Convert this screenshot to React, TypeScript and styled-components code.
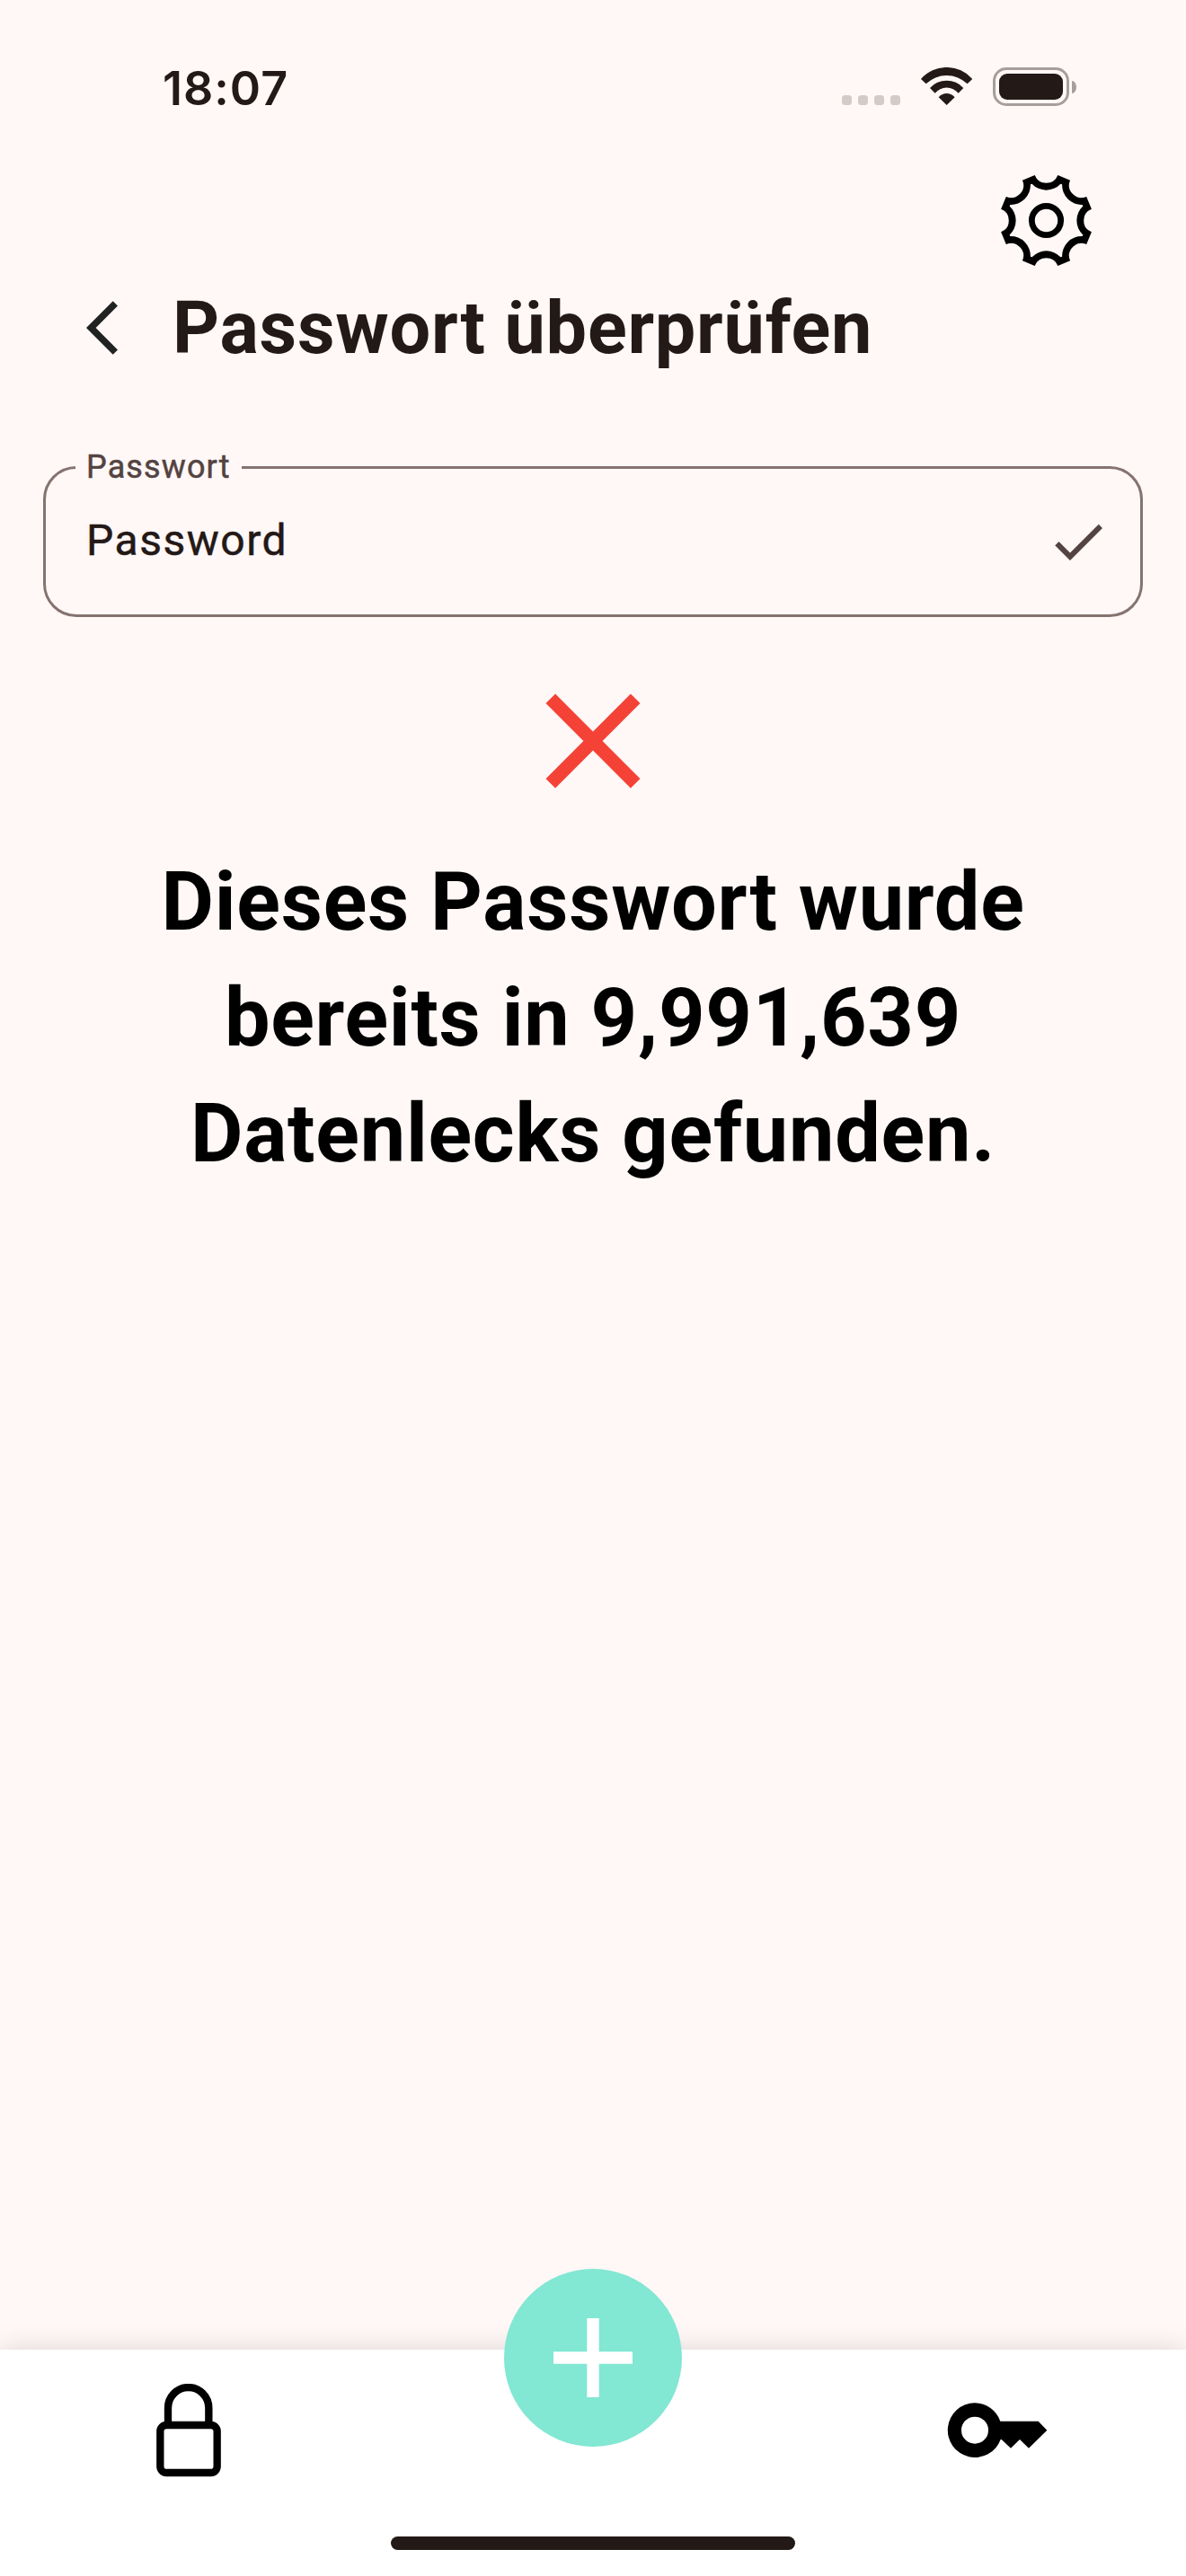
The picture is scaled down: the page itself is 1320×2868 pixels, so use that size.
import React from "react";
import styled, { createGlobalStyle } from "styled-components";

const ink = "#231917";
const surface = "#fff8f6";

const GlobalStyle = createGlobalStyle`
  *, *::before, *::after { box-sizing: border-box; }
  body { margin: 0; background: ${surface}; }
  svg { display: block; flex: none; }
  button { padding: 0; border: 0; background: none; font: inherit; color: inherit; }
`;

const Screen = styled.div`
  display: flex;
  flex-direction: column;
  width: 1320px;
  height: 2868px;
  overflow: hidden;
  background: ${surface};
  color: ${ink};
  font-family: Roboto, "Liberation Sans", sans-serif;
`;

const StatusBar = styled.header`
  display: flex;
  justify-content: space-between;
  align-items: flex-start;
  height: 192px;
  padding: 75px 122px 0 181px;
`;

const Clock = styled.time`
  margin-top: -8.5px;
  font: 600 52px/64px Inter, "Liberation Sans", sans-serif;
  letter-spacing: 1px;
`;

const StatusIcons = styled.div`
  display: flex;
  align-items: flex-start;
`;

const SignalDots = styled.div`
  display: flex;
  gap: 7px;
  margin: 31px 23px 0 0;
`;

const SignalDot = styled.span`
  width: 11px;
  height: 11px;
  border-radius: 3.5px;
  background: #d4cbc9;
`;

const Battery = styled.div`
  display: flex;
  width: 85px;
  height: 43px;
  margin-left: 22.7px;
  padding: 4px;
  border: 3px solid #a79e9c;
  border-radius: 15px;
`;

const BatteryLevel = styled.span`
  flex: 1;
  border-radius: 9px;
  background: ${ink};
`;

const BatteryCap = styled.span`
  width: 5px;
  height: 14px;
  margin: 14.5px 0 0 3px;
  border-radius: 0 5px 5px 0 / 0 7px 7px 0;
  background: #a79e9c;
`;

const Toolbar = styled.div`
  display: flex;
  justify-content: flex-end;
  height: 108px;
  padding: 3px 105px 0 0;
`;

const TitleRow = styled.div`
  display: flex;
  align-items: center;
  gap: 24px;
  height: 129px;
  padding-left: 96px;
`;

const Title = styled.h1`
  margin: 2px 0 0;
  font-size: 81px;
  font-weight: 700;
  line-height: 96px;
  letter-spacing: 0.75px;
`;

const Field = styled.fieldset`
  display: flex;
  justify-content: space-between;
  height: 188px;
  margin: 70px 48px 0;
  padding: 0 33px;
  border: 3px solid #857370;
  border-radius: 37px;
`;

const FieldLabel = styled.legend`
  height: 42px;
  padding: 0 12px;
  color: #534341;
  font-size: 36px;
  line-height: 42px;
  letter-spacing: 1.125px;
  -webkit-text-stroke: 0.5px currentColor;
`;

const FieldValue = styled.span`
  margin: 25px 0 0 12px;
  font-size: 48px;
  line-height: 72px;
  letter-spacing: 1.5px;
  -webkit-text-stroke: 0.5px currentColor;
`;

const FieldAction = styled.span`
  margin-top: 26px;
`;

const Result = styled.main`
  display: flex;
  flex: 1;
  flex-direction: column;
  align-items: center;
  padding-top: 48px;
`;

const ResultText = styled.p`
  width: 1080px;
  margin: 24.5px 0 0;
  color: #000;
  font-size: 90px;
  font-weight: 700;
  line-height: 129px;
  letter-spacing: 0.75px;
  text-align: center;
`;

const BottomBar = styled.nav`
  position: relative;
  display: flex;
  flex-direction: column;
  height: 252px;
  background: #fff;
  box-shadow: 0 0 30px rgba(0, 0, 0, 0.14);
`;

const Tabs = styled.div`
  display: flex;
  justify-content: space-between;
  align-items: flex-start;
  flex: 1;
  padding: 38px 154px 0 174px;
`;

const Tab = styled.button<{ $drop?: number }>`
  margin-top: ${(p) => p.$drop ?? 0}px;
`;

const AddButton = styled.button`
  position: absolute;
  top: -90px;
  left: 561px;
  display: grid;
  place-items: center;
  width: 198px;
  height: 198px;
  border-radius: 50%;
  background: #82e7d3;
`;

const HomeIndicator = styled.div`
  align-self: center;
  width: 450px;
  height: 15px;
  margin-bottom: 29px;
  border-radius: 8px;
  background: ${ink};
`;

const polar = (deg: number, r: number) => {
  const a = (deg * Math.PI) / 180;
  return `${(Math.sin(a) * r).toFixed(2)} ${(-Math.cos(a) * r).toFixed(2)}`;
};

/* Eight notches, each an arc curving towards the hub. */
const notches = (half: number, r: number, arc: number) =>
  Array.from({ length: 8 }, (_, i) => {
    const c = i * 45;
    return `${i ? "L" : "M"}${polar(c - half, r)}A${arc} ${arc} 0 0 0 ${polar(c + half, r)}`;
  }).join("") + "Z";

const GearIcon = () => (
  <svg width="101" height="101" viewBox="-151.5 -151.5 303 303">
    <path fillRule="evenodd" d={notches(14.3, 156, 41.5) + notches(21.3, 131.5, 65)} />
    <circle r="48.5" fill="none" stroke="#000" strokeWidth="20.5" />
  </svg>
);

const WifiIcon = () => (
  <svg width="57.3" height="42" viewBox="315 45 172 126" fill={ink}>
    <path d="M315 84A114 114 0 0 1 487 84L470 100A99 99 0 0 0 332 100Z" />
    <path d="M345 114A75 75 0 0 1 457 114L440 131A51 51 0 0 0 362 131Z" />
    <path d="M374 145A34.5 34.5 0 0 1 428 145L401 171Z" />
  </svg>
);

const LockIcon = () => (
  <svg width="72" height="104" viewBox="73 162 216 312" fill="none" stroke="#000" strokeWidth="25">
    <rect x="86" y="300" width="190" height="159" rx="21" />
    <path d="M112 296V243A68 69 0 0 1 248 243V296" />
  </svg>
);

const KeyIcon = () => (
  <svg width="112" height="61" viewBox="72 225 336 183">
    <path
      fillRule="evenodd"
      d="M165 226A91 91 0 0 1 250 287H377L406 317L345 377L315 348L285 377L254 348H251A91 91 0 1 1 165 226ZM165 272A45 45 0 1 0 165 362A45 45 0 1 0 165 272Z"
    />
  </svg>
);

export default function App() {
  return (
    <Screen>
      <GlobalStyle />
      <StatusBar>
        <Clock>18:07</Clock>
        <StatusIcons>
          <SignalDots>
            <SignalDot />
            <SignalDot />
            <SignalDot />
            <SignalDot />
          </SignalDots>
          <WifiIcon />
          <Battery>
            <BatteryLevel />
          </Battery>
          <BatteryCap />
        </StatusIcons>
      </StatusBar>
      <Toolbar>
        <GearIcon />
      </Toolbar>
      <TitleRow>
        <svg width="72" height="72" viewBox="0 0 24 24" fill="#202322">
          <path d="M11.67 3.87L9.9 2.1 0 12l9.9 9.9 1.77-1.77L3.54 12z" />
        </svg>
        <Title>Passwort überprüfen</Title>
      </TitleRow>
      <Field>
        <FieldLabel>Passwort</FieldLabel>
        <FieldValue>Password</FieldValue>
        <FieldAction>
          <svg width="72" height="72" viewBox="0 0 24 24" fill="#534341">
            <path d="M9 16.17L4.83 12l-1.42 1.41L9 19 21 7l-1.41-1.41z" />
          </svg>
        </FieldAction>
      </Field>
      <Result>
        <svg width="180" height="180" viewBox="0 0 24 24" fill="#f44336">
          <path d="M19 6.41L17.59 5 12 10.59 6.41 5 5 6.41 10.59 12 5 17.59 6.41 19 12 13.41 17.59 19 19 17.59 13.41 12z" />
        </svg>
        <ResultText>Dieses Passwort wurde bereits in 9,991,639 Datenlecks gefunden.</ResultText>
      </Result>
      <BottomBar>
        <Tabs>
          <Tab>
            <LockIcon />
          </Tab>
          <Tab $drop={21}>
            <KeyIcon />
          </Tab>
        </Tabs>
        <HomeIndicator />
        <AddButton>
          <svg width="88" height="88" viewBox="0 0 88 88" fill="#fff">
            <path d="M37.3 0h13.4v37.3H88v13.4H50.7V88H37.3V50.7H0V37.3h37.3z" />
          </svg>
        </AddButton>
      </BottomBar>
    </Screen>
  );
}
